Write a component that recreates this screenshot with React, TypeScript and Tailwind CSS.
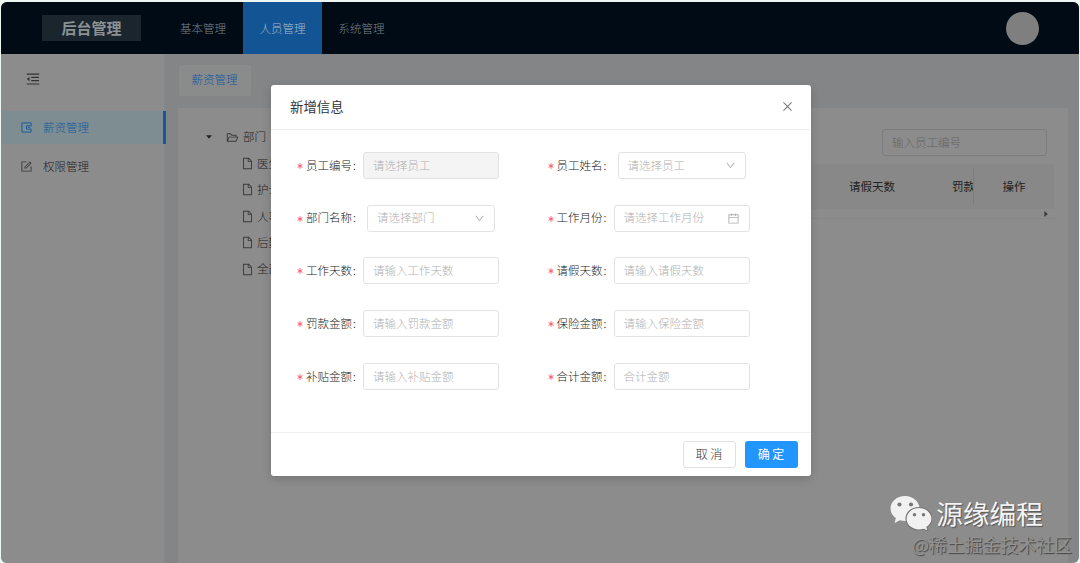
import React from "react";
import {
  AiOutlineMenuFold, AiOutlineFolderOpen, AiOutlineFile, AiOutlineCalendar,
  AiOutlineDown, AiOutlineClose, AiOutlineForm, AiFillCaretDown, AiFillCaretRight,
} from "react-icons/ai";

type Kind = "input" | "disabled" | "select" | "date";
type FieldProps = { label: string; hint: string; kind?: Kind };

const fields: FieldProps[] = [
  { label: "员工编号", hint: "请选择员工", kind: "disabled" },
  { label: "员工姓名", hint: "请选择员工", kind: "select" },
  { label: "部门名称", hint: "请选择部门", kind: "select" },
  { label: "工作月份", hint: "请选择工作月份", kind: "date" },
  { label: "工作天数", hint: "请输入工作天数" },
  { label: "请假天数", hint: "请输入请假天数" },
  { label: "罚款金额", hint: "请输入罚款金额" },
  { label: "保险金额", hint: "请输入保险金额" },
  { label: "补贴金额", hint: "请输入补贴金额" },
  { label: "合计金额", hint: "合计金额" },
];

const departments = ["医生", "护士", "人事", "后勤", "全部"];

function Field({ label, hint, kind = "input" }: FieldProps) {
  const size = kind === "select" ? "ml-[10px] w-[128px]" : "ml-[6px] w-[136px]";
  const fill = kind === "disabled" ? "bg-[#f4f4f4]" : "bg-white";
  return (
    <div className="flex h-[27px] items-center">
      <svg viewBox="0 0 6 6" className="mr-[3px] mt-px size-[6px]" stroke="#ff4d5f" strokeWidth="0.9" fill="none"><path d="M3 .2v5.600M.6 1.600l4.800 2.800M5.400 1.600L.6 4.400" /></svg>
      <span className="w-[51px] whitespace-nowrap text-[#222]">{label}<span className="pl-px">:</span></span>
      <div className={`${size} ${fill} flex h-[27px] items-center justify-between rounded-[3px] border border-[#e2e2e2] pl-[9px] pr-[9px] text-[#b0b0b0]`}>
        <span>{hint}</span>
        {kind === "select" && <AiOutlineDown className="size-[11px]" />}
        {kind === "date" && <AiOutlineCalendar className="size-[13px]" />}
      </div>
    </div>
  );
}

function WechatLogo() {
  return (
    <svg viewBox="0 0 42 36" className="h-9 w-[42px]">
      <path d="M15 1C7 1 .5 6.500 .5 13.500c0 4 2 7.300 5.300 9.600L4.600 28l5.200-2.800c1.700.5 3.400.7 5.200.7 8 0 14.500-5.600 14.500-12.400S23 1 15 1Z" fill="#f1f1f1" />
      <path d="M29 12.500c-7.300 0-13 5-13 11.300S21.700 35 29 35c1.700 0 3.200-.2 4.600-.7L38 36.200l-1-3.900c3-2.100 5-5.100 5-8.500 0-6.300-5.700-11.300-13-11.300Z" fill="#f1f1f1" stroke="#777" strokeWidth="1.2" />
      <g fill="#777"><circle cx="9.500" cy="9.500" r="2.100" /><circle cx="21" cy="9.500" r="2.100" /><circle cx="24.500" cy="19.800" r="1.700" /><circle cx="33.500" cy="19.800" r="1.700" /></g>
    </svg>
  );
}

export default function App() {
  return (
    <div className="h-[563px] w-[1080px] overflow-hidden bg-[#eef6f4] pl-px pr-px pt-[2px] font-['Noto_Sans_CJK_SC',sans-serif] text-[11.5px] font-light leading-none">
      <div className="relative flex h-[561px] flex-col overflow-hidden rounded-[6px] bg-[#838587]">
        <header className="flex h-[52px] shrink-0 bg-[#000b16]">
          <div className="ml-[41px] mt-[13px] flex h-[26px] w-[99px] items-center justify-center bg-[#1b252d] pb-px text-[15px] font-bold text-[#8b9194]">后台管理</div>
          <nav className="ml-[22px] flex text-[#7d8388]">
            <div className="flex w-[80px] items-center justify-center pt-[2px]">基本管理</div>
            <div className="flex w-[79px] items-center justify-center bg-[#125494] pt-[2px] text-[#a9bac9]">人员管理</div>
            <div className="flex w-[79px] items-center justify-center pt-[2px]">系统管理</div>
          </nav>
          <div className="ml-auto mr-[40px] mt-[10px] size-[33px] rounded-full bg-[#7f7f7f]" />
        </header>

        <div className="flex min-h-0 flex-1">
          <aside className="w-[165px] shrink-0 border-r-2 border-[#838787] bg-[#8c8c8c] text-[#222]">
            <div className="flex h-[57px] pl-[24px] pt-[17px] text-[#333]"><AiOutlineMenuFold className="size-4" /></div>
            <div className="-mr-[2px] flex h-[33px] items-center border-r-[3px] border-[#1259a0] bg-[#7e8d91] pl-[20px] text-[#1259a0]">
              <svg viewBox="0 0 12 12" className="mr-[11px] size-[11px]" fill="none" stroke="currentColor" strokeWidth="1"><path d="M11 4V1H1v10h10V8M11.500 4.200H6v3.600h5.500M7.500 6h2" /></svg>
              薪资管理
            </div>
            <div className="mt-[6px] flex h-[33px] items-center pl-[19px]"><AiOutlineForm className="mr-[10px] size-[13px] text-[#3a3a3a]" />权限管理</div>
          </aside>

          <main className="flex flex-1 flex-col pl-[12px] pr-[11px]">
            <div className="mb-[12px] ml-px mt-[11px] flex h-[31px] w-[72px] shrink-0 items-center justify-center rounded-[2px] bg-[#8a8b8b] pb-[2px] pr-px text-[#12599f]">薪资管理</div>
            <section className="flex flex-1 bg-[#8c8c8c] text-[#222]">
              <div className="w-[140px] shrink-0 pl-[27px] pt-[16px]">
                <div className="flex h-[26.400px] items-center"><AiFillCaretDown className="mr-[13px] size-2" /><AiOutlineFolderOpen className="mr-[4px] size-[13px] text-[#3a3a3a]" />部门</div>
                {departments.map((name) => (
                  <div key={name} className="flex h-[26.400px] items-center pl-[36px]"><AiOutlineFile className="mr-[3px] size-[13px] text-[#3a3a3a]" />{name}</div>
                ))}
              </div>
              <div className="flex min-w-0 flex-1 flex-col pr-[14px] pt-[21px]">
                <div className="mr-[7px] flex h-[27px] w-[165px] items-center self-end rounded-[3px] border border-[#7d7d7d] pl-[9px] text-[#646464]">输入员工编号</div>
                <div className="mt-[8px] flex h-[45px] justify-end bg-[#888889] font-normal text-[#222]">
                  <div className="flex w-[103px] items-center">请假天数</div>
                  <div className="flex w-[21px] items-center overflow-hidden whitespace-nowrap">罚款金额</div>
                  <div className="my-1 w-px bg-[#7d7d7d]" />
                  <div className="flex w-[80px] items-center justify-center">操作</div>
                </div>
                <div className="flex h-[10px] items-center justify-end border-b border-[#878787] pr-[4px] text-[#3a3a3a]"><AiFillCaretRight className="size-2" /></div>
              </div>
            </section>
          </main>
        </div>

        <div className="absolute left-[270px] top-[82.500px] flex h-[391px] w-[540px] flex-col rounded-[3px] bg-white shadow-[0_3px_10px_rgba(0,0,0,0.16)]">
          <div className="flex h-[45px] items-center justify-between border-b border-[#f0f0f0] pl-[19px] pr-[17px]">
            <h2 className="text-[13.400px] font-normal text-[#333]">新增信息</h2>
            <AiOutlineClose className="size-[13px] text-[#777]" />
          </div>
          <div className="grid flex-1 auto-rows-[27px] grid-cols-[250.500px_1fr] content-start gap-y-[25.700px] pl-[26px] pt-[22.500px]">
            {fields.map((f) => <Field key={f.label} {...f} />)}
          </div>
          <div className="flex h-[43.500px] items-center justify-end gap-[9px] border-t border-[#f0f0f0] pr-[13px]">
            <button className="h-[27px] w-[53px] rounded-[3px] border border-[#e0e0e0] pr-px text-[12px] text-[#333]">取 消</button>
            <button className="h-[27px] w-[53px] rounded-[3px] bg-[#2196ff] pr-px text-[12px] font-normal text-white">确 定</button>
          </div>
        </div>

        <div className="absolute bottom-[9px] right-[7px] flex flex-col items-end">
          <div className="mr-[29px] flex items-center gap-[4px]">
            <WechatLogo />
            <span className="text-[26.700px] font-normal text-[#f4f4f4] [text-shadow:1px_1px_1px_#555]">源缘编程</span>
          </div>
          <span className="mt-[5px] text-[17.900px] font-normal text-[#929292] [text-shadow:1px_1px_1px_#444]">@稀土掘金技术社区</span>
        </div>
      </div>
    </div>
  );
}
